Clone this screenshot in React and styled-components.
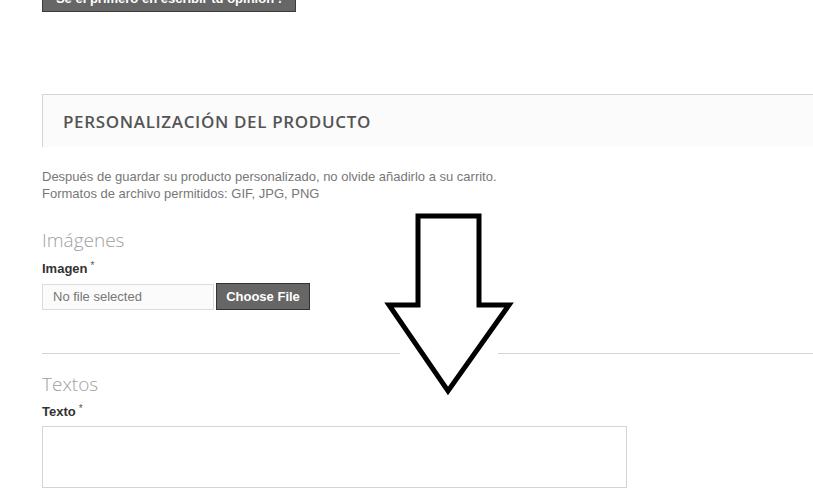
import React from "react";
import styled, { createGlobalStyle } from "styled-components";

const Global = createGlobalStyle`
  html, body { margin: 0; padding: 0; background: #fff; }
  body { font-family: Arial, "Liberation Sans", sans-serif; }
`;

const Page = styled.div`
  position: relative;
  width: 813px;
  height: 489px;
  overflow: hidden;
  padding-left: 42px;
  box-sizing: border-box;
`;

const TopStrip = styled.div`
  height: 12px;
  overflow: hidden;
  display: flex;
  align-items: flex-end;
`;

const DarkButton = styled.button`
  flex: none;
  height: 27px;
  width: 254px;
  padding: 0;
  background: #666;
  border: 1px solid #3c3c3c;
  color: #fff;
  font-family: "Liberation Sans", Arial, sans-serif;
  font-weight: bold;
  font-size: 13px;
  line-height: 25px;
  text-align: center;
`;

const PanelHead = styled.div`
  margin-top: 82px;
  margin-right: -10px;
  height: 52px;
  background: #fbfbfb;
  border-top: 1px solid #d6d4d4;
  border-left: 1px solid #d6d4d4;
  display: flex;
  align-items: center;
  padding-left: 20px;
`;

const PanelTitle = styled.h3`
  margin: 0;
  font-family: "Open Sans", sans-serif;
  font-weight: 600;
  font-size: 17px;
  color: #555454;
  letter-spacing: 0.65px;
`;

const Info = styled.p`
  margin: 21px 0 0;
  font-family: "Liberation Sans", Arial, sans-serif;
  font-size: 13px;
  line-height: 17px;
  color: #777;
`;

const SectionTitle = styled.h4`
  margin: ${(p) => p.$top}px 0 0;
  font-family: "Open Sans", sans-serif;
  font-weight: 300;
  font-size: 19px;
  line-height: 22px;
  color: #a0a0a0;
`;

const FieldLabel = styled.label`
  display: block;
  margin-top: ${(p) => p.$top}px;
  font-family: "Liberation Sans", Arial, sans-serif;
  font-weight: bold;
  font-size: 13px;
  line-height: 16px;
  color: #333;
`;

const Star = styled.sup`
  font-size: 10px;
  font-weight: normal;
  color: #555;
  margin-left: 3px;
  vertical-align: 4px;
  line-height: 0;
`;

const FileRow = styled.div`
  display: flex;
  align-items: flex-start;
  gap: 2px;
  margin-top: 6px;
`;

const FileName = styled.div`
  width: 172px;
  height: 26px;
  box-sizing: border-box;
  margin-top: 1px;
  border: 1px solid #dcdcdc;
  background: #fbfbfb;
  padding-left: 10px;
  font-family: "Liberation Sans", Arial, sans-serif;
  font-size: 13px;
  line-height: 24px;
  color: #777;
`;

const ChooseButton = styled.button`
  width: 94px;
  height: 27px;
  box-sizing: border-box;
  background: #666;
  border: 1px solid #333;
  color: #fff;
  font-family: "Liberation Sans", Arial, sans-serif;
  font-weight: bold;
  font-size: 13px;
  padding: 0;
`;

const Divider = styled.hr`
  margin: 43px 0 0;
  border: 0;
  border-top: 1px solid #d6d4d4;
`;

const TextArea = styled.textarea`
  display: block;
  margin-top: 6px;
  width: 585px;
  height: 62px;
  box-sizing: border-box;
  border: 1px solid #d6d4d4;
  background: #fff;
  resize: none;
  outline: none;
`;

const ArrowLayer = styled.svg`
  position: absolute;
  left: 0;
  top: 0;
  pointer-events: none;
`;

export default function App() {
  return (
    <>
      <Global />
      <Page>
        <TopStrip>
          <DarkButton>Sé el primero en escribir tu opinión !</DarkButton>
        </TopStrip>
        <PanelHead>
          <PanelTitle>PERSONALIZACIÓN DEL PRODUCTO</PanelTitle>
        </PanelHead>
        <Info>
          Después de guardar su producto personalizado, no olvide añadirlo a su carrito.
          <br />
          Formatos de archivo permitidos: GIF, JPG, PNG
        </Info>
        <SectionTitle $top={27}>Imágenes</SectionTitle>
        <FieldLabel $top={10}>
          Imagen<Star>*</Star>
        </FieldLabel>
        <FileRow>
          <FileName>No file selected</FileName>
          <ChooseButton>Choose File</ChooseButton>
        </FileRow>
        <Divider />
        <SectionTitle $top={19}>Textos</SectionTitle>
        <FieldLabel $top={9}>
          Texto<Star>*</Star>
        </FieldLabel>
        <TextArea />
        <ArrowLayer width="813" height="489" viewBox="0 0 813 489">
          <rect x="400" y="345" width="98" height="20" fill="#fff" />
          <polygon
            points="418,216 479,216 479,305 509,305 448,391 389,305 418,305"
            fill="none"
            stroke="#000"
            strokeWidth="5"
            strokeLinejoin="miter"
          />
        </ArrowLayer>
      </Page>
    </>
  );
}
